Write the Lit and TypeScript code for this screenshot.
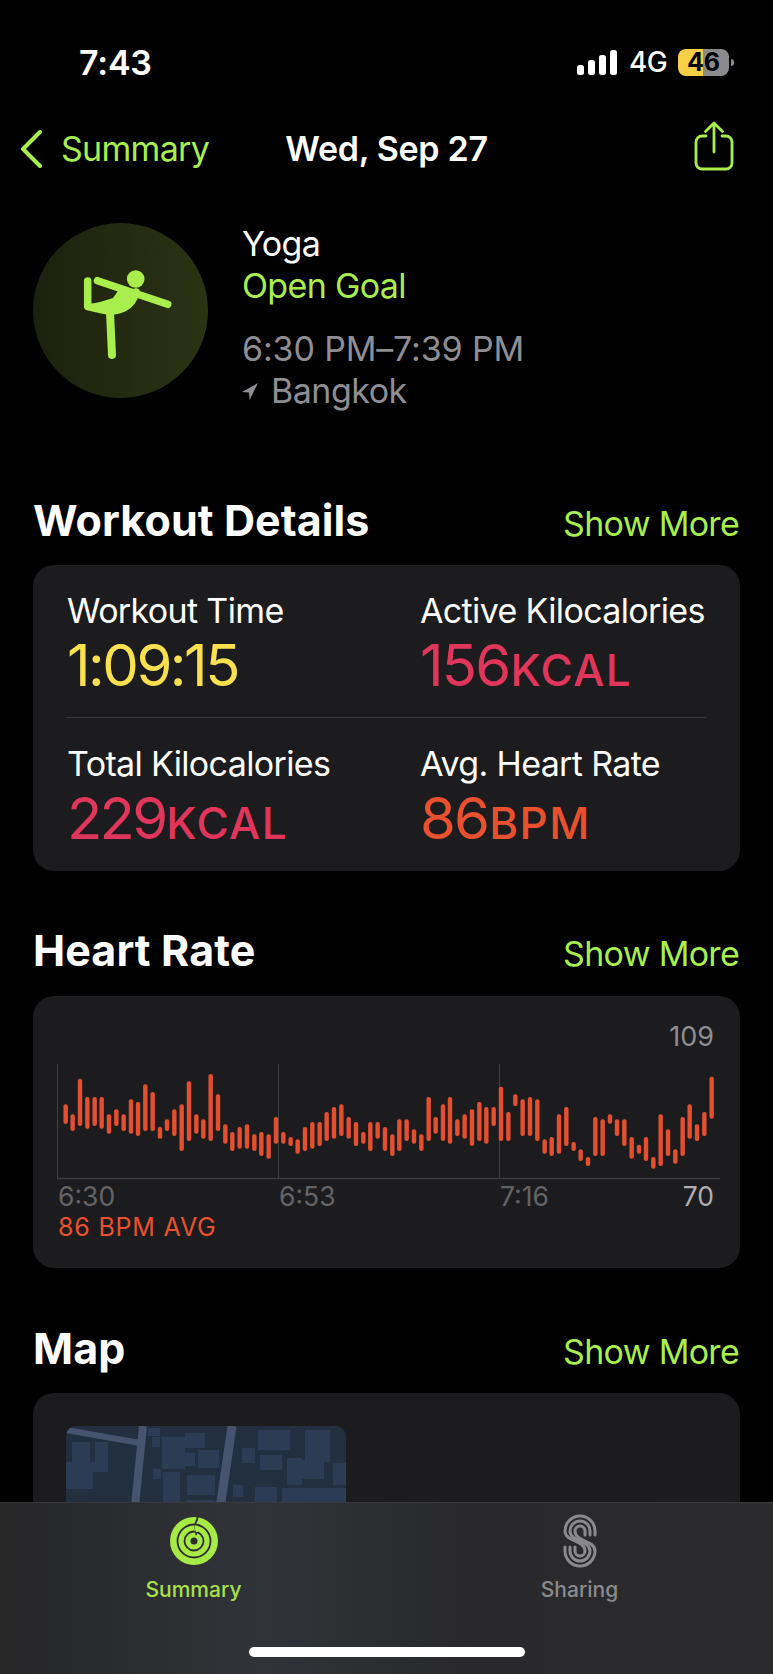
import { LitElement, html, css, svg } from "lit";
import { customElement } from "lit/decorators.js";

const LEFT: number[][] = [
[107,253,312],[128,283,333],[150,177,318],[172,231,326],[194,231,318],[215,231,326],[237,283,341],[259,268,318],[281,283,333],[303,238,341],[324,246,348],[346,193,333],[368,216,333],[390,321,356],[411,298,333],[433,268,348],[455,253,393],[477,184,363],[499,283,341],[520,298,356],[542,162,363],[564,223,333],[586,313,371],[607,336,393],[629,321,386],[651,313,386],[673,343,393],[694,336,408],[716,343,416],[738,291,371],[760,336,371],[782,351,378],[803,358,401],[825,321,393],[847,306,386],[869,306,378],[890,276,363],[912,261,356],[934,253,348],[956,291,356],[978,306,378],[1000,336,371],[1021,306,393],[1043,306,356],[1065,321,393],[1087,343,408],[1108,298,393]];
const RIGHT: number[][] = [
[20,298,363],[42,328,371],[64,343,393],[86,231,363],[107,291,341],[129,253,363],[150,231,371],[172,298,348],[194,283,356],[216,268,378],[238,246,363],[259,261,371],[281,261,318],[303,200,363],[325,276,363],[346,223,258],[368,238,348],[390,231,348],[412,238,363],[434,358,401],[455,351,408],[477,283,401],[499,261,378],[521,366,393],[542,388,423],[564,411,438],[586,291,408],[608,298,408],[630,283,311],[651,298,348],[673,298,378],[695,351,416],[717,374,401],[738,351,423],[760,411,446],[782,283,438],[804,328,408],[826,388,431],[848,291,408],[869,253,356],[891,313,363],[913,276,348],[935,170,296]];

// plot svg origin on the page: x 57, y 1052
const toBar = (originX: number) => (b: number[]) => ({
  x: originX + b[0] / 3 - 57,
  y: 1020 + b[1] / 3 - 1052,
  h: (b[2] - b[1]) / 3,
});
const BARS = [...LEFT.map(toBar(30)), ...RIGHT.map(toBar(400))];

const BUILDINGS: number[][] = [
  [6,16,18,20],[29,16,13,21],[0,36,42,10],[0,44,27,19],[82,2,12,8],[86,11,8,10],[96,11,23,32],[119,7,20,15],[119,27,10,13],[132,24,21,18],[106,36,8,7],[87,43,8,10],[97,46,17,40],[121,49,28,20],[121,74,28,14],
  [176,22,13,15],[194,29,22,15],[192,4,32,20],[239,4,25,32],[221,32,15,27],[236,34,22,19],[267,37,14,22],[167,59,10,12],[189,61,22,25],[216,62,65,25],
];

@customElement("app-root")
export class AppRoot extends LitElement {
  static styles = css`
    :host {
      display: block;
      position: relative;
      width: 773px;
      height: 1674px;
      overflow: hidden;
      background: #000;
      color: #fff;
      font-family: Inter, "Liberation Sans", sans-serif;
      --g: #a9ee4c;
    }
    svg { display: block; }
    .status {
      height: 124px;
      display: flex;
      align-items: center;
      padding: 0 39px 0 79px;
      box-sizing: border-box;
    }
    .clock { font-size: 34px; font-weight: 600; letter-spacing: -0.2px; flex: 1; }
    .status-right { display: flex; align-items: center; }
    .net { font-size: 28px; font-weight: 500; margin: 0 11px 0 12px; letter-spacing: -0.6px; }
    .battery {
      position: relative;
      width: 51px;
      height: 27px;
      border-radius: 8px;
      background: linear-gradient(90deg, #f7cf46 49%, #8a8a8c 49%);
      color: #000;
      font-size: 25px;
      font-weight: 700;
      display: flex;
      align-items: center;
      justify-content: center;
      margin-right: 5px;
    }
    .nub {
      position: absolute;
      right: -5px;
      top: 10px;
      width: 3px;
      height: 7px;
      border-radius: 0 3px 3px 0;
      background: #8a8a8c;
    }
    .nav {
      height: 50px;
      display: grid;
      grid-template-columns: 1fr auto 1fr;
      align-items: center;
      padding: 0 20px;
    }
    .back { display: flex; align-items: center; gap: 19px; color: var(--g); font-size: 34px; letter-spacing: -0.7px; }
    .back span, .title { padding-bottom: 2px; }
    .title { font-size: 34px; font-weight: 600; letter-spacing: -0.3px; }
    .share { justify-self: end; margin: -7px 19px 0 0; }
    .head {
      display: flex;
      gap: 34px;
      margin-top: 49px;
      padding-left: 33px;
    }
    .ring {
      width: 175px;
      height: 175px;
      border-radius: 50%;
      background: linear-gradient(90deg, #1c210d, #2b3314);
    }
    .lines { font-size: 34px; line-height: 42px; letter-spacing: -0.65px; }
    .green { color: var(--g); }
    .gray { color: #8e8e93; }
    .time { margin-top: 21px; letter-spacing: -0.15px; }
    .place { display: flex; align-items: center; gap: 13px; letter-spacing: -0.5px; }
    .sec {
      display: flex;
      justify-content: space-between;
      align-items: baseline;
      padding: 0 34px 0 33px;
      height: 48px;
    }
    .sec h2 { margin: 0; font-size: 43px; line-height: 48px; font-weight: 700; letter-spacing: 0.1px; }
    .more { font-size: 34px; color: var(--g); letter-spacing: -0.7px; }
    .s1 { margin-top: 84px; }
    .s2 { margin-top: 55px; }
    .s3 { margin-top: 56px; }
    .card {
      margin: 21px 33px 0 33px;
      background: #1c1c1e;
      border-radius: 21px;
      box-sizing: border-box;
    }
    .metrics { height: 306px; padding: 25px 34px 0; }
    .mrow { display: grid; grid-template-columns: 353px 1fr; }
    .mrow.second { margin-top: 25px; }
    .rule { height: 1px; background: #38383a; margin-top: 19px; }
    .lab { font-size: 34px; line-height: 42px; letter-spacing: -0.65px; white-space: nowrap; }
    .val { font-size: 58px; line-height: 66px; letter-spacing: -1.8px; white-space: nowrap; }
    .val small { font-size: 44px; line-height: 1; letter-spacing: 1.4px; margin-left: 1px; font-weight: 500; }
    .clockv { letter-spacing: -2.5px; }
    .tight { letter-spacing: -2.8px; }
    .yellow { color: #f9e04e; }
    .pink { color: #e1365b; }
    .orange { color: #e9502e; }
    .chart { height: 272px; margin-top: 22px; padding-top: 26px; position: relative; }
    .top-val { text-align: right; padding-right: 26px; font-size: 27px; line-height: 30px; color: #8e8e93; }
    .plot { margin-left: 24px; }
    .axis {
      display: grid;
      grid-template-columns: 221px 221px 1fr auto;
      margin: 1px 26px 0 25px;
      font-size: 26.500px;
      line-height: 30px;
      color: #636366;
    }
    .axis .end { color: #aeaeb2; }
    .avg { margin: 1px 0 0 25px; font-size: 25px; line-height: 30px; color: #e9502e; letter-spacing: 0.8px; }
    .mapc { height: 200px; padding: 33px 0 0 33px; }
    .thumb { width: 280px; height: 110px; border-radius: 10px; overflow: hidden; }
    .tabs {
      position: absolute;
      left: 0;
      right: 0;
      bottom: 0;
      height: 172px;
      border-top: 1px solid #3a3a3c;
      box-sizing: border-box;
      background: linear-gradient(90deg, #262627 0%, #303338 34%, #29292b 60%, #2b2b2d 100%);
      display: grid;
      grid-template-columns: 387px 1fr;
    }
    .tab { display: flex; flex-direction: column; align-items: center; font-size: 21px; font-weight: 500; height: 106px; }
    .tab .ic { height: 76px; display: flex; align-items: center; }
    .tab span { line-height: 24px; margin-top: -1px; }
    .t1 { color: #a7e04a; }
    .t2 { color: #8a8a8d; padding-right: 1px; }
    .bar {
      position: absolute;
      left: 249px;
      bottom: 17px;
      width: 276px;
      height: 10px;
      border-radius: 5px;
      background: #fff;
    }
  `;

  private signal() {
    return html`<svg width="40" height="25" viewBox="0 0 40 25" fill="#fff">
      <rect x="0" y="15" width="7" height="10" rx="2.5"></rect>
      <rect x="11" y="10" width="7" height="15" rx="2.5"></rect>
      <rect x="22" y="5" width="7" height="20" rx="2.5"></rect>
      <rect x="33" y="0" width="7" height="25" rx="2.5"></rect>
    </svg>`;
  }

  private shareIcon() {
    return html`<svg width="40" height="50" viewBox="0 0 40 50" fill="none" stroke="#a9ee4c" stroke-width="2.8" stroke-linecap="round" stroke-linejoin="round">
      <path d="M12 15H8a6 6 0 0 0-6 6v21a6 6 0 0 0 6 6h24a6 6 0 0 0 6-6V21a6 6 0 0 0-6-6h-4"></path>
      <path d="M20 31V3M11.500 10.500 20 2l8.500 8.500"></path>
    </svg>`;
  }

  private yogaIcon() {
    return html`<svg width="175" height="175" viewBox="33 223 175 175" fill="none">
      <circle cx="135.700" cy="279" r="8.800" fill="#a9ee4c"></circle>
      <path d="M97.500 280.700 167.700 304.300" stroke="#a9ee4c" stroke-width="7.500" stroke-linecap="round"></path>
      <path d="M87.700 281V306.500L103 310C118 313 132 308 136 292" stroke="#a9ee4c" stroke-width="7.500" stroke-linecap="round" stroke-linejoin="round"></path>
      <path d="M110 312 112 355" stroke="#a9ee4c" stroke-width="8" stroke-linecap="round"></path>
      <path d="M90 304 112 311 125 308 136 291 120 288 113 298 100 302Z" fill="#a9ee4c"></path>
    </svg>`;
  }

  private locIcon() {
    return html`<svg width="16" height="17" viewBox="0 0 16 17" fill="#8e8e93">
      <path d="M16 0 0 9 7 9.500 7.500 17Z"></path>
    </svg>`;
  }

  private plot() {
    return html`<svg class="plot" width="663" height="128" viewBox="0 0 663 128">
      <path d="M0.500 12V127M221.500 12V127M442.500 12V127" stroke="#404042" stroke-width="1"></path>
      <path d="M0 126.500H663" stroke="#3a3a3c" stroke-width="1.500"></path>
      ${BARS.map(
        (b) => svg`<rect x=${b.x - 2.2} y=${b.y} width="4.400" height=${b.h} rx="2" fill="#e4502f"></rect>`
      )}
    </svg>`;
  }

  private mapThumb() {
    return html`<svg class="thumb" viewBox="0 0 280 110">
      <rect width="280" height="110" fill="#222f3f"></rect>
      ${BUILDINGS.map(
        (b) => svg`<rect x=${b[0]} y=${b[1]} width=${b[2]} height=${b[3]} fill="#2c3c55"></rect>`
      )}
      <path d="M0 4 74 17" stroke="#465470" stroke-width="6"></path>
      <path d="M77 0 66 110" stroke="#465470" stroke-width="8"></path>
      <path d="M166 0 150 110" stroke="#465470" stroke-width="9"></path>
    </svg>`;
  }

  private summaryIcon() {
    return html`<svg width="48" height="48" viewBox="-24 -24 48 48" fill="none">
      <circle r="24" fill="#a7ea45"></circle>
      <circle r="16.500" stroke="#2c2d31" stroke-width="1.800"></circle>
      <circle r="9.500" stroke="#2c2d31" stroke-width="1.800"></circle>
      <circle r="3.500" fill="#2c2d31"></circle>
      <path d="M3.500 -24C3.500 -19 1 -19 1 -16C1 -12 3 -11 2 -6" stroke="#2c2d31" stroke-width="1.800"></path>
      <path d="M1.500 -15.500 3 -9" stroke="#a7ea45" stroke-width="2.500"></path>
    </svg>`;
  }

  private sharingIcon() {
    const strands = [-5, 0, 5].map((d) => {
      const ru = 10 + d;
      const rl = 10 - d;
      return svg`<path d="M${ru} -6 V-10 A${ru} ${ru} 0 0 0 ${-ru} -10 C${-ru} 1 ${rl} -1 ${rl} 10 A${rl} ${rl} 0 0 1 ${-rl} 10 V6"></path>`;
    });
    return html`<svg width="36" height="56" viewBox="-18 -28 36 56" fill="none" stroke="#8a8a8d" stroke-width="3" stroke-linecap="round">
      ${strands}
    </svg>`;
  }

  render() {
    return html`
      <div class="status">
        <div class="clock">7:43</div>
        <div class="status-right">
          ${this.signal()}
          <div class="net">4G</div>
          <div class="battery">46<i class="nub"></i></div>
        </div>
      </div>
      <div class="nav">
        <div class="back">
          <svg width="22" height="38" viewBox="0 0 22 38" fill="none" stroke="#a9ee4c" stroke-width="4" stroke-linecap="round" stroke-linejoin="round">
            <path d="M20 2 3 19 20 36"></path>
          </svg>
          <span>Summary</span>
        </div>
        <div class="title">Wed, Sep 27</div>
        <div class="share">${this.shareIcon()}</div>
      </div>
      <div class="head">
        <div class="ring">${this.yogaIcon()}</div>
        <div class="lines">
          <div>Yoga</div>
          <div class="green">Open Goal</div>
          <div class="gray time">6:30 PM–7:39 PM</div>
          <div class="gray place">${this.locIcon()}Bangkok</div>
        </div>
      </div>

      <div class="sec s1"><h2>Workout Details</h2><span class="more">Show More</span></div>
      <div class="card metrics">
        <div class="mrow">
          <div><div class="lab">Workout Time</div><div class="val yellow clockv">1:09:15</div></div>
          <div><div class="lab">Active Kilocalories</div><div class="val pink">156<small>KCAL</small></div></div>
        </div>
        <div class="rule"></div>
        <div class="mrow second">
          <div><div class="lab">Total Kilocalories</div><div class="val pink tight">229<small>KCAL</small></div></div>
          <div><div class="lab">Avg. Heart Rate</div><div class="val orange">86<small>BPM</small></div></div>
        </div>
      </div>

      <div class="sec s2"><h2>Heart Rate</h2><span class="more">Show More</span></div>
      <div class="card chart">
        <div class="top-val">109</div>
        ${this.plot()}
        <div class="axis"><span>6:30</span><span>6:53</span><span>7:16</span><span class="end">70</span></div>
        <div class="avg">86 BPM AVG</div>
      </div>

      <div class="sec s3"><h2>Map</h2><span class="more">Show More</span></div>
      <div class="card mapc">${this.mapThumb()}</div>

      <div class="tabs">
        <div class="tab t1"><div class="ic">${this.summaryIcon()}</div><span>Summary</span></div>
        <div class="tab t2"><div class="ic">${this.sharingIcon()}</div><span>Sharing</span></div>
        <i class="bar"></i>
      </div>
    `;
  }
}
